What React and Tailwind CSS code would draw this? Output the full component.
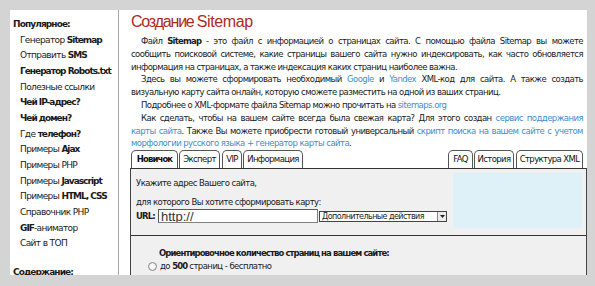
const F = "font-['DejaVu_Sans',sans-serif] tracking-[-0.62px]";
const B = "font-bold tracking-[-0.9px]";

function Line({ children, j, indent }) {
  return (
    <div
      className={`${j ? "text-justify [text-align-last:justify]" : "text-left"} ${indent ? "indent-[10px]" : ""}`}
    >
      {children}
    </div>
  );
}

function A({ children }) {
  return <span className="text-[#3d8ecf]">{children}</span>;
}

function Tab({ w, children, active, cls = "" }) {
  return (
    <div
      className={`${w} ${cls} h-[18px] border border-b-0 border-[#555] rounded-t-[5px] bg-white flex items-center justify-center text-[8.5px] leading-none text-[#111] whitespace-nowrap ${active ? B : ""}`}
    >
      {children}
    </div>
  );
}

const side = [
  [["Генератор ", 0], ["Sitemap", 1]],
  [["Отправить ", 0], ["SMS", 1]],
  [["Генератор Robots.txt", 1]],
  [["Полезные ссылки", 0]],
  [["Чей IP-адрес?", 1]],
  [["Чей домен?", 1]],
  [["Где ", 0], ["телефон?", 1]],
  [["Примеры ", 0], ["Ajax", 1]],
  [["Примеры PHP", 0]],
  [["Примеры ", 0], ["Javascript", 1]],
  [["Примеры ", 0], ["HTML, CSS", 1]],
  [["Справочник PHP", 0]],
  [["GIF", 1], ["-аниматор", 0]],
  [["Сайт в ТОП", 0]],
];

export default function App() {
  return (
    <div className={`w-[595px] h-[286px] bg-[#d4d4d4] pt-[10px] pl-[10px] overflow-hidden ${F}`}>
      <div className="bg-white w-[577px] h-[265px] flex overflow-hidden text-[#1a1a1a]">
        <aside className="w-[109px] shrink-0 border-r border-[#a6a6a6] pt-[7px] pl-[3px] text-[9px] leading-[15.67px] whitespace-nowrap">
          <div className={B}>Популярное:</div>
          <ul className="pl-[7px]">
            {side.map((parts, i) => (
              <li key={i}>
                {parts.map(([t, b], k) => (
                  <span key={k} className={b ? "font-bold tracking-[-1px]" : ""}>
                    {t}
                  </span>
                ))}
              </li>
            ))}
          </ul>
          <div className={`${B} mt-[13px]`}>Содержание:</div>
        </aside>

        <main className="flex-1 flex flex-col pl-[12px] pt-[2px] min-w-0">
          <h1 className="font-['Liberation_Sans',sans-serif] text-[16px] leading-[20px] h-[20px] text-[#ab2a1f] whitespace-nowrap">
            <span className="tracking-[-1.2px]">Создание </span>
            <span className="tracking-[-0.4px]">Sitemap</span>
          </h1>

          <div className="mt-[3px] mr-[4px] text-[8.5px] leading-[12.8px] tracking-[-0.55px]">
            <Line j indent>
              Файл <b className="font-bold tracking-[-0.8px]">Sitemap</b> - это файл с информацией о страницах сайта. С помощью файла Sitemap вы можете
            </Line>
            <Line j>
              сообщить поисковой системе, какие страницы вашего сайта нужно индексировать, как часто обновляется
            </Line>
            <Line>информация на страницах, а также индексация каких страниц наиболее важна.</Line>
            <Line j indent>
              Здесь вы можете сформировать необходимый <A>Google</A> и <A>Yandex</A> XML-код для сайта. А также создать
            </Line>
            <Line>визуальную карту сайта онлайн, которую сможете разместить на одной из ваших страниц.</Line>
            <Line indent>
              Подробнее о XML-формате файла Sitemap можно прочитать на <A>sitemaps.org</A>
            </Line>
            <Line j indent>
              Как сделать, чтобы на вашем сайте всегда была свежая карта? Для этого создан <A>сервис поддержания</A>
            </Line>
            <Line j>
              <A>карты сайта</A>. Также Вы можете приобрести готовый универсальный <A>скрипт поиска на вашем сайте с учетом</A>
            </Line>
            <Line>
              <A>морфологии русского языка + генератор карты сайта</A>.
            </Line>
          </div>

          <div className="flex justify-between items-end pr-[4px]">
            <div className="flex gap-[1px]">
              <Tab w="w-[47px]" active>Новичок</Tab>
              <Tab w="w-[41px]">Эксперт</Tab>
              <Tab w="w-[20px]" cls="ml-[1px]">VIP</Tab>
              <Tab w="w-[60px]">Информация</Tab>
            </div>
            <div className="flex gap-[1px]">
              <Tab w="w-[25px]">FAQ</Tab>
              <Tab w="w-[40px]">История</Tab>
              <Tab w="w-[67px]" cls="ml-[1px]">Структура XML</Tab>
            </div>
          </div>

          <div className="-ml-[1px] w-[457px] flex-1 flex flex-col border-x border-[#444] bg-[#f0f0f0] text-[8.5px] tracking-[-0.55px]">
            <div className="h-[67px] shrink-0 border-t border-[#333] flex">
              <div className="flex-1 pl-[5px] pt-[8px]">
                <div className="leading-[13px]">Укажите адрес Вашего сайта,</div>
                <div className="leading-[13px] mt-[6px]">для которого Вы хотите сформировать карту:</div>
                <div className="flex items-center h-[14px]">
                  <span className={`w-[22px] ${B}`}>URL:</span>
                  <input
                    defaultValue="http://"
                    className="w-[160px] h-[14px] bg-white border border-[#808080] border-t-[#5a5a5a] border-l-[#5a5a5a] pl-[2px] p-0 font-['Liberation_Sans',sans-serif] tracking-normal text-[13px] leading-[12px] text-[#333] outline-none"
                  />
                  <div className="ml-[1px] w-[128px] h-[11px] bg-white border border-[#444] flex">
                    <div className="flex-1 overflow-hidden whitespace-nowrap text-[8px] leading-[9px] pl-[2px]">
                      Дополнительные действия
                    </div>
                    <div className="w-[9px] h-[9px] border-l border-[#888] bg-[#ececec] flex items-center justify-center">
                      <svg width="5" height="3" viewBox="0 0 5 3">
                        <path d="M0 0h5L2.5 3z" fill="#222" />
                      </svg>
                    </div>
                  </div>
                </div>
              </div>
              <div className="w-[129px] h-[55px] mt-[4px] mr-[4px] bg-[#dff1f8]" />
            </div>
            <div className="flex-1 border-t border-[#333] pt-[11px]">
              <div className={`pl-[28px] ${B} leading-[13px] whitespace-nowrap`}>
                Ориентировочное количество страниц на вашем сайте:
              </div>
              <div className="pl-[17px] flex items-center h-[13px] leading-[13px]">
                <span className="w-[9px] h-[9px] rounded-full border border-[#8a8a8a] bg-[#f8f8f8] shadow-[inset_0_0_1px_#aaa]" />
                <span className="ml-[3px]">
                  до <b className={B}>500</b> страниц - бесплатно
                </span>
              </div>
            </div>
          </div>
        </main>
      </div>
    </div>
  );
}
